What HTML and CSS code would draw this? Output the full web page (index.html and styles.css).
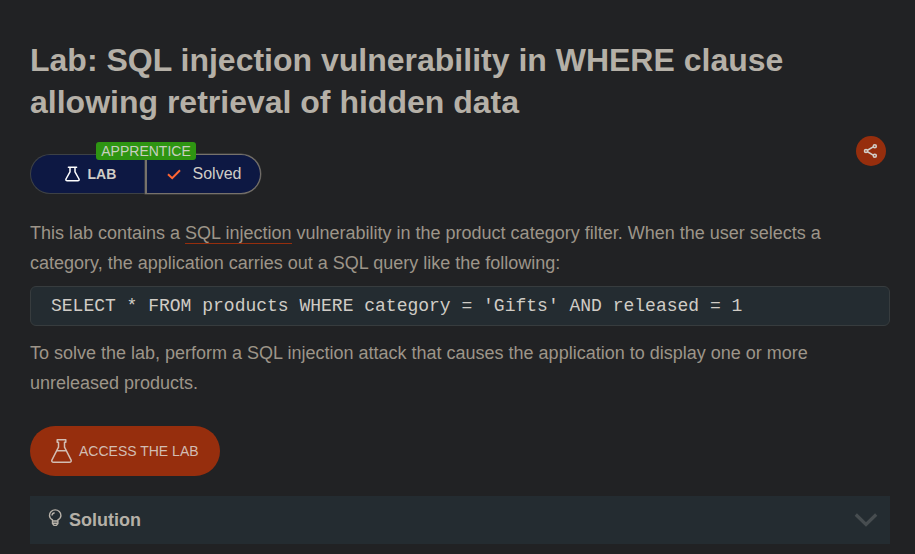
FILE: index.html
```html
<!DOCTYPE html>
<html lang="en">
<head>
<meta charset="utf-8">
<title>Lab: SQL injection</title>
<link rel="stylesheet" href="styles.css">
</head>
<body>
<main class="page">
  <h1>Lab: SQL injection vulnerability in WHERE clause allowing retrieval of hidden data</h1>
  <div class="meta">
    <div class="status">
      <span class="level">APPRENTICE</span>
      <div class="status-type">
        <svg width="15" height="16" viewBox="0 0 15 16" fill="none" stroke="#fff" stroke-width="1.5" stroke-linecap="round" stroke-linejoin="round"><path d="M3.400 1.200h8.200M5 1.200v4.600L1 13q-.500 1.800 1.200 1.800h10.600q1.700 0 1.200-1.800L10 5.800V1.200"/></svg>
        <span>LAB</span>
      </div>
      <div class="status-result">
        <svg width="14" height="11" viewBox="0 0 14 11" fill="none" stroke="#ff6633" stroke-width="2"><path d="M1 5.300 5.200 9.200 13 1.200"/></svg>
        <span>Solved</span>
      </div>
    </div>
    <button class="share" aria-label="Share">
      <svg width="16" height="16" viewBox="0 0 16 16" fill="none" stroke="#d2cec8" stroke-width="1.600"><path d="M4.500 7.200 10.200 3.900M4.500 8.800l5.700 3.300"/><circle cx="3" cy="8" r="1.500"/><circle cx="11.800" cy="3.300" r="1.500"/><circle cx="11.800" cy="12.700" r="1.500"/></svg>
    </button>
  </div>
  <p>This lab contains a <a class="link">SQL injection</a> vulnerability in the product category filter. When the user selects a category, the application carries out a SQL query like the following:</p>
  <code class="query">SELECT * FROM products WHERE category = 'Gifts' AND released = 1</code>
  <p>To solve the lab, perform a SQL injection attack that causes the application to display one or more unreleased products.</p>
  <a class="access">
    <svg width="21" height="26" viewBox="0 0 21 26" fill="none" stroke="#d2bdb3" stroke-width="1.500" stroke-linejoin="round"><path d="M6.200 1.800h8.600v2.400h-1.300v5L20 21.800q.800 2.400-1.600 2.400H2.600Q.200 24.200 1 21.800L7.500 9.200v-5H6.200zM5.700 12.800h9.600"/></svg>
    <span>ACCESS THE LAB</span>
  </a>
  <section class="solution">
    <svg class="bulb" width="14" height="18" viewBox="0 0 14 18" fill="none" stroke="#b8b2a9" stroke-width="1.400" stroke-linejoin="round"><path d="M4.500 12v-1.200C2.600 9.800 1.500 8.500 1.500 6.500a5.700 5.600 0 0 1 11.400 0c0 2-1.100 3.300-3 4.300V12zM4.500 12v2.500l1.500 1.900h2.400l1.500-1.900V12M4.500 14.200h5.400M4 6.500Q4.100 4.100 6.600 3.700"/></svg>
    <span>Solution</span>
    <svg class="chevron" width="24" height="16" viewBox="0 0 24 16" fill="none" stroke="#474d50" stroke-width="3.200"><path d="M1.800 2.500 12 12.500 22.200 2.500"/></svg>
  </section>
</main>
</body>
</html>
```
FILE: styles.css
```css
* { box-sizing: border-box; }
body {
  margin: 0;
  background: #212224;
  color: #9d9589;
  font-family: "Liberation Sans", Arial, sans-serif;
}
.page { padding: 39px 25px 10px 30px; }
h1 {
  margin: 0;
  font-size: 32px;
  line-height: 42px;
  color: #b5b0a7;
}
.meta {
  display: flex;
  justify-content: space-between;
  align-items: flex-start;
  padding: 13px 4px 0 0;
  height: 95px;
}
.status {
  position: relative;
  display: flex;
  width: 231px;
  height: 40px;
  margin-top: 18px;
}
.status-type, .status-result {
  display: flex;
  align-items: center;
  height: 40px;
  background: #0d1843;
  color: #d0cdc7;
}
.status-type {
  width: 115px;
  padding-left: 34px;
  gap: 7.5px;
  border: 1px solid #3d4145;
  border-right: 0;
  border-radius: 20px 0 0 20px;
  font-size: 14px;
  font-weight: bold;
}
.status-result {
  width: 116px;
  padding-left: 20px;
  gap: 11.5px;
  border: 1.500px solid #77726b;
  border-left-width: 2px;
  border-radius: 0 20px 20px 0;
  box-shadow: 0 0 0 0.500px #55534f;
  font-size: 16px;
}
.level {
  position: absolute;
  left: 66px;
  top: -12px;
  width: 100px;
  height: 18px;
  border-radius: 3px;
  background: #2e9512;
  color: #c8cfc0;
  font-size: 14px;
  line-height: 19px;
  text-align: center;
}
.share {
  display: flex;
  align-items: center;
  justify-content: center;
  width: 30px;
  height: 30px;
  padding: 0;
  border: 0;
  border-radius: 50%;
  background: #962e0d;
}
p {
  margin: 0;
  font-size: 18px;
  line-height: 30px;
}
.link { border-bottom: 1px solid #962e0d; }
.query {
  display: block;
  height: 40px;
  margin: 8px 0 12px;
  padding-left: 20px;
  border: 1px solid #373c3e;
  border-radius: 6px;
  background: #242c31;
  color: #d0ccc6;
  font: 18px/38px "Liberation Mono", monospace;
}
.access {
  display: flex;
  align-items: center;
  width: 190px;
  height: 50px;
  margin: 28px 0 20px;
  padding-left: 21px;
  gap: 7px;
  border-radius: 25px;
  background: #962e0d;
  color: #d2bdb3;
  font-size: 14px;
}
.solution {
  display: flex;
  align-items: center;
  height: 48px;
  padding: 0 12px 0 18px;
  background: #242c31;
  color: #b5b0a7;
  font-size: 18px;
  font-weight: bold;
}
.bulb { margin: -5px 7px 0 0; }
.chevron { margin-left: auto; }
```
